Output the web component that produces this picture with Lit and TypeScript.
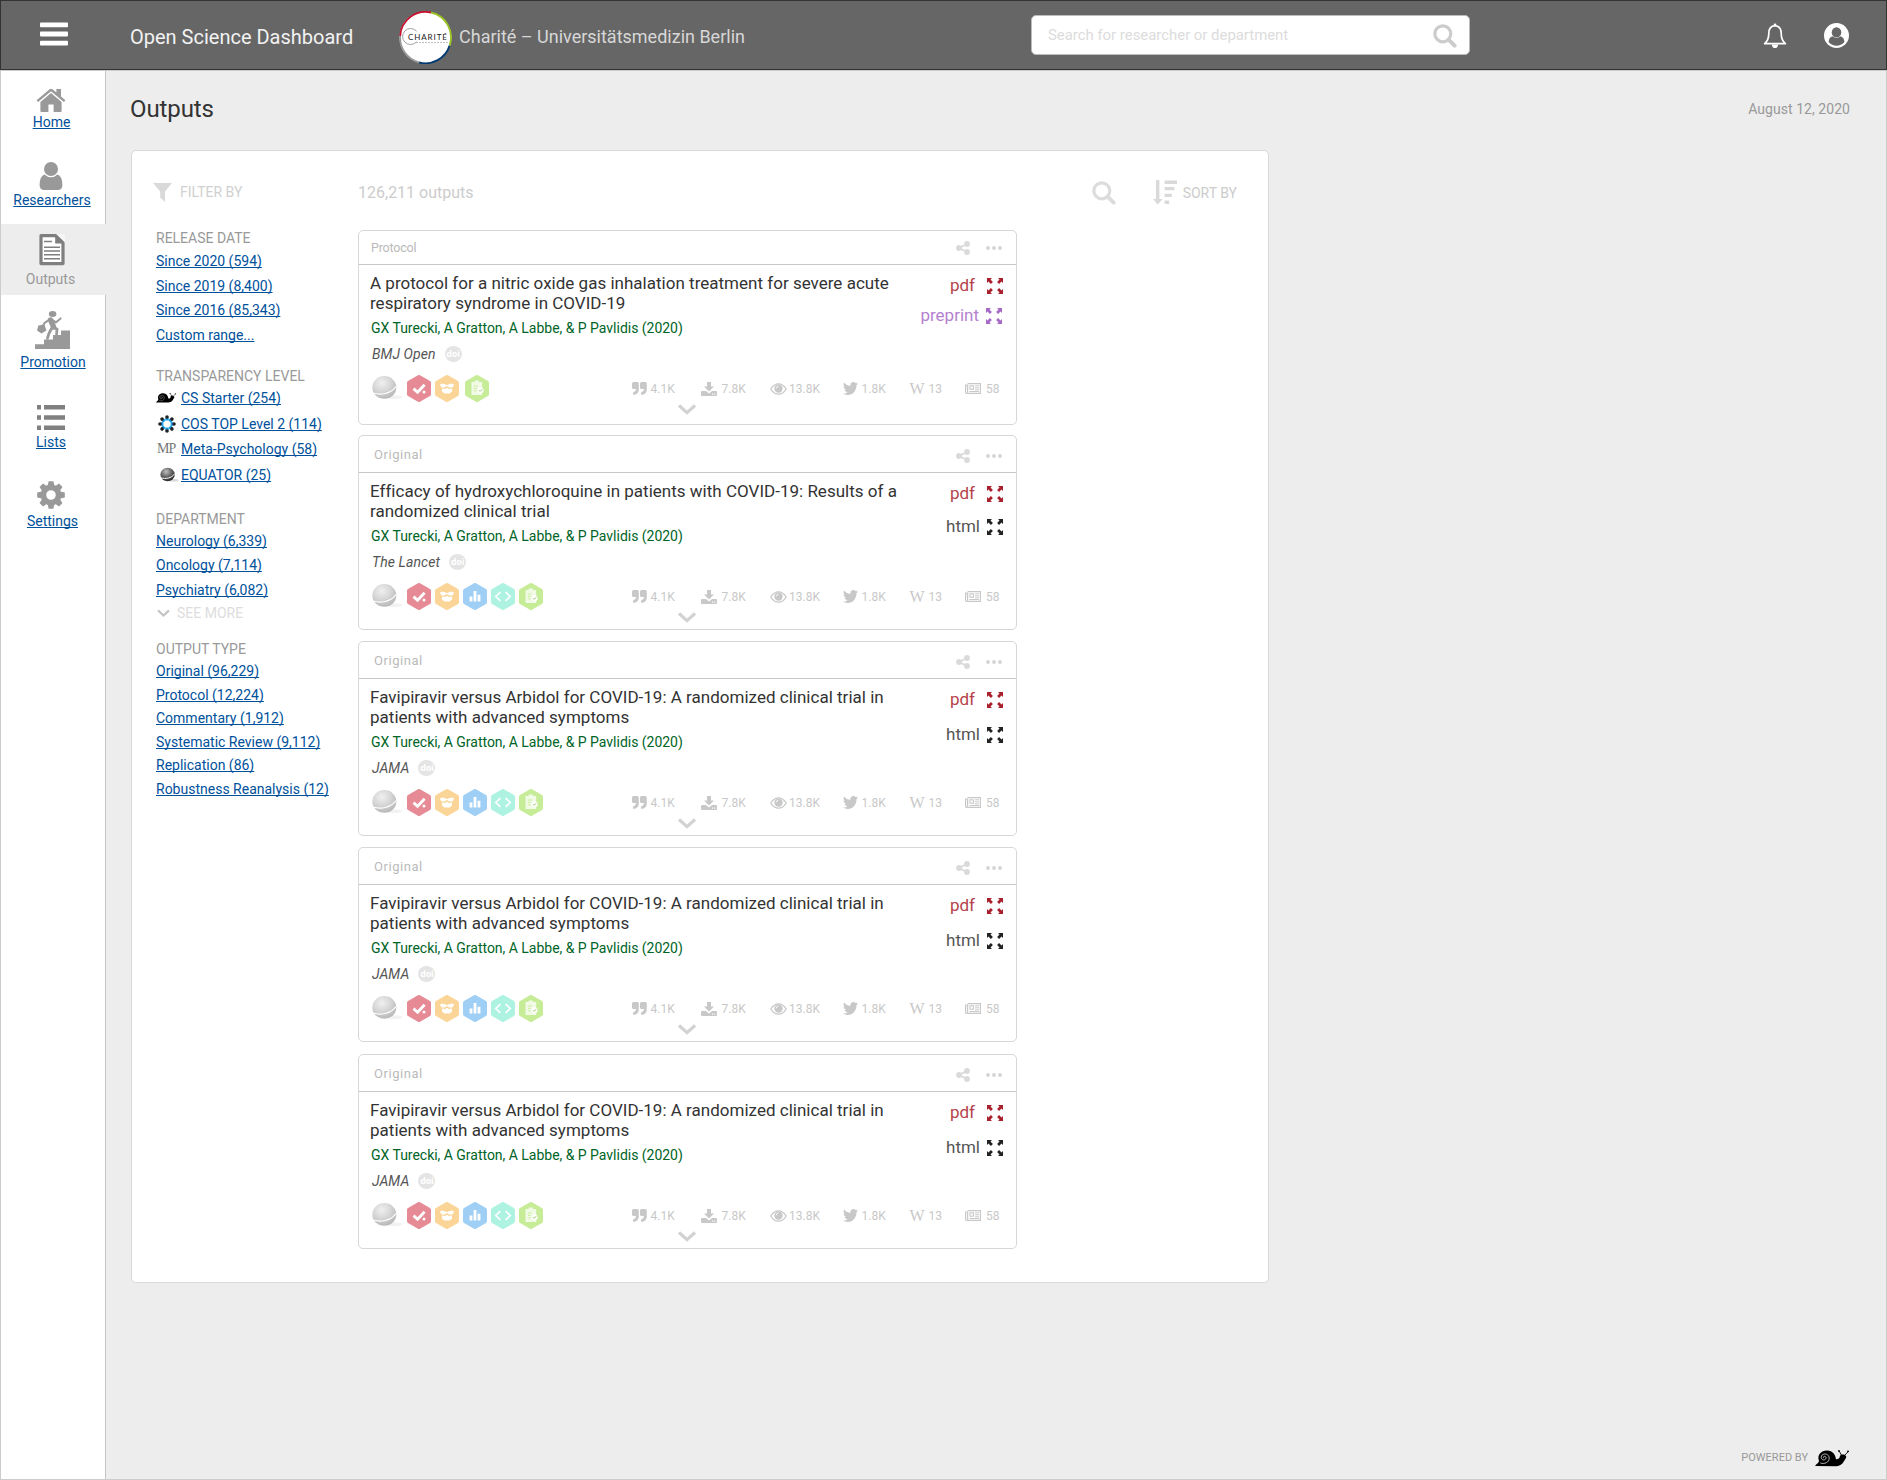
import { LitElement, html, css, svg, nothing } from "lit";
import { customElement, property } from "lit/decorators.js";
import { classMap } from "lit/directives/class-map.js";

type Badge = "check" | "box" | "bars" | "code" | "clip";

interface Output {
  kind: string;
  title: [string, string];
  journal: string;
  second: "preprint" | "html";
  badges: Badge[];
  compact?: boolean;
}

const ALL: Badge[] = ["check", "box", "bars", "code", "clip"];

const favipiravir: Output = {
  kind: "Original",
  title: ["Favipiravir versus Arbidol for COVID-19: A randomized clinical trial in", "patients with advanced symptoms"],
  journal: "JAMA",
  second: "html",
  badges: ALL,
};

const OUTPUTS: Output[] = [
  {
    kind: "Protocol",
    title: ["A protocol for a nitric oxide gas inhalation treatment for severe acute", "respiratory syndrome in COVID-19"],
    journal: "BMJ Open",
    second: "preprint",
    badges: ["check", "box", "clip"],
  },
  {
    kind: "Original",
    title: ["Efficacy of hydroxychloroquine in patients with COVID-19: Results of a", "randomized clinical trial"],
    journal: "The Lancet",
    second: "html",
    badges: ALL,
    compact: true,
  },
  favipiravir,
  favipiravir,
  favipiravir,
];

const searchIcon = (size: number, color: string) => html`
  <svg width=${size} height=${size} viewBox="0 0 24 24" fill="none" stroke=${color}>
    <circle cx="9.8" cy="9.8" r="8" stroke-width="3.2" />
    <path d="M15.6 15.6 L21.6 21.6" stroke-width="4" stroke-linecap="round" />
  </svg>`;

const chevron = (w: number, h: number, color: string, sw: number) => html`
  <svg width=${w} height=${h} viewBox="0 0 ${w} ${h}" fill="none">
    <path d="M1 1.4 L${w / 2} ${h - 2.4} L${w - 1} 1.4" stroke=${color} stroke-width=${sw} />
  </svg>`;

const snail = (w: number, h: number, eye: string) => html`
  <svg width=${w} height=${h} viewBox="0 0 34 17">
    <path fill="#000" d="M0 16 C1.5 13.5 3.5 13.5 4 11 C1.6 4.6 6.5 .4 12 .5 C18 .6 20.5 5 21 9.3 C23 9.6 24.6 8.6 24.8 6.6 C25 4.6 27 4.2 28.6 4.6 C31 5.2 32 7 30.6 8.6 C28.6 12 27.2 16 21 16.3 Z" />
    <path fill="none" stroke="#000" stroke-width=".9" d="M26.4 5 L24.2 1 M29.6 5.4 L33.4 1.4" />
    <circle cx="24" cy="1" r=".9" /><circle cx="33" cy="1.3" r=".9" />
    <path fill="none" stroke=${eye} stroke-width=".8" d="M8.6 8.2 C7.6 6.4 10.4 5.4 11 7.6 C11.4 10.4 6.4 11 6.2 7.4 C6.2 2.8 14 2.8 14.2 8 C14.4 12.6 9 14.4 5.4 13" />
  </svg>`;

const sphere = (w: number, h: number, dark: boolean) => html`
  <svg width=${w} height=${h} viewBox="0 0 31 25">
    <defs>
      <radialGradient id="ball" cx=".4" cy=".3" r=".75">
        <stop offset="0" stop-color=${dark ? "#c0c0c0" : "#f0f0f0"} />
        <stop offset=".5" stop-color=${dark ? "#666" : "#d6d6d6"} />
        <stop offset="1" stop-color=${dark ? "#222" : "#b4b4b4"} />
      </radialGradient>
    </defs>
    <ellipse cx="22" cy="22.2" rx="8.5" ry="2" fill=${dark ? "#d8d8d8" : "#f2f2f2"} />
    <ellipse cx="12.3" cy="12.4" rx="12" ry="11.3" fill="url(#ball)" />
    <path d="M1.4 18 C8 20.4 19 19 23.8 11.6" fill="none" stroke="#fff" stroke-width=${dark ? 1.6 : 1.1} />
  </svg>`;

const arrows = (color: string) => html`
  <svg width="16" height="16" viewBox="0 0 16 16" fill=${color}>
    ${[0, 90, 180, 270].map((a) => svg`<path transform="rotate(${a} 8 8)" d="M0 0 H5 L3.5 1.5 L5.9 3.9 L3.9 5.9 L1.5 3.5 L0 5 Z" />`)}
  </svg>`;

const BADGE_COLOR: Record<Badge, string> = {
  check: "#e68a95",
  box: "#fad597",
  bars: "#9fcff5",
  code: "#aef3e2",
  clip: "#c6ec97",
};

const BADGE_ART = {
  check: svg`<path d="M6.5 13.6 L10.6 17.2 L17.6 9.8" fill="none" stroke="#fff" stroke-width="2.8" /><circle cx="17" cy="17" r="1.5" fill="#fff" />`,
  box: svg`<path fill="#fff" d="M4.8 9.4 L7.4 8.4 L12 10 L16.6 8.4 L19.2 9.4 L17.4 12.4 L14.4 12.6 L12 11 L9.6 12.6 L6.6 12.4 Z M7 13.6 L10.2 14 L12 12.8 L13.8 14 L17 13.6 V16.6 L14.6 18.6 H9.4 L7 16.6 Z" />`,
  bars: svg`<path fill="#fff" d="M6.6 13.4 h2.8 v5.2 h-2.8 z M10.6 8 h2.8 v10.6 h-2.8 z M14.6 11.8 h2.8 v6.8 h-2.8 z" />`,
  code: svg`<path d="M9.4 9.2 L4.8 13.5 L9.4 17.8 M14.6 9.2 L19.2 13.5 L14.6 17.8" fill="none" stroke="#fff" stroke-width="1.7" />`,
  clip: svg`<path fill="#fff" fill-opacity=".75" d="M6.5 7 H9.6 V5.6 H14 V7 H17.2 V20 H6.5 Z" /><path d="M8.8 11 h4 M8.8 13.4 h3 M8.8 15.8 h3" stroke="#c6ec97" stroke-width=".9" /><circle cx="15.6" cy="15.2" r="3" fill="#fff" /><path d="M14 15.2 L15.3 16.4 L17.4 13.9" fill="none" stroke="#9fca6c" stroke-width=".9" />`,
};

const hexagon = (b: Badge) => html`
  <svg class=${classMap({ hex: true, clip: b === "clip" })} width="24" height="27" viewBox="0 0 24 27">
    <path d="M12 2 L22 7.7 V19.3 L12 25 L2 19.3 V7.7 Z" fill=${BADGE_COLOR[b]} stroke=${BADGE_COLOR[b]} stroke-width="4" stroke-linejoin="round" />
    ${BADGE_ART[b]}
  </svg>`;

const QUOTE = "M1.5 0 H5.3 Q6.8 0 6.8 1.6 V7.4 Q6.6 12.4 1.6 12.8 Q.9 12.8 .9 12 V11 Q.9 10.4 1.6 10.3 Q4 9.8 4 7 H1.6 Q0 7 0 5.4 V1.6 Q0 0 1.5 0 Z";

const STATS = [
  {
    cls: "quote",
    value: "4.1K",
    icon: html`<svg width="15" height="13" viewBox="0 0 15 13" fill="#c8c8c8"><path d=${QUOTE} /><path transform="translate(8 0)" d=${QUOTE} /></svg>`,
  },
  {
    cls: "download",
    value: "7.8K",
    icon: html`<svg width="16" height="14" viewBox="0 0 16 14" fill="#c8c8c8"><path d="M6 0 H10 V4.4 H13 L8 9.4 L3 4.4 H6 Z" /><path fill-rule="evenodd" d="M1 9 H5 L8 11.6 L11 9 H15 Q16 9 16 10 V13 Q16 14 15 14 H1 Q0 14 0 13 V10 Q0 9 1 9 Z M11 11.6 V12.7 H12.1 V11.6 Z M13.2 11.6 V12.7 H14.3 V11.6 Z" /></svg>`,
  },
  {
    cls: "views",
    value: "13.8K",
    icon: html`<svg width="17" height="12" viewBox="0 0 17 12"><path d="M.8 6 Q4 .8 8.5 .8 T16.2 6 Q13 11.2 8.5 11.2 T.8 6 Z" fill="#fff" stroke="#c8c8c8" stroke-width="1.3" /><circle cx="8.5" cy="5.6" r="4.2" fill="#c8c8c8" /><path d="M6.2 5.4 Q6.4 3.4 8.4 3.2" fill="none" stroke="#fff" stroke-width=".9" /></svg>`,
  },
  {
    cls: "tweets",
    value: "1.8K",
    icon: html`<svg width="15" height="13" viewBox="0 48 512 416" preserveAspectRatio="none" fill="#c8c8c8"><path d="M459.37 151.716c.325 4.548.325 9.097.325 13.645 0 138.72-105.583 298.558-298.558 298.558-59.452 0-114.68-17.219-161.137-47.106 8.447.974 16.568 1.299 25.34 1.299 49.055 0 94.213-16.568 130.274-44.832-46.132-.975-84.792-31.188-98.112-72.772 6.498.974 12.995 1.624 19.818 1.624 9.421 0 18.843-1.3 27.614-3.573-48.081-9.747-84.143-51.98-84.143-102.985v-1.299c13.969 7.797 30.214 12.67 47.431 13.319-28.264-18.843-46.781-51.005-46.781-87.391 0-19.492 5.197-37.36 14.294-52.954 51.655 63.675 129.3 105.258 216.365 109.807-1.624-7.797-2.599-15.918-2.599-24.04 0-57.828 46.782-104.934 104.934-104.934 30.213 0 57.502 12.67 76.67 33.137 23.715-4.548 46.456-13.32 66.599-25.34-7.798 24.366-24.366 44.833-46.132 57.827 21.117-2.273 41.584-8.122 60.426-16.243-14.292 20.791-32.161 39.308-52.628 54.253z" /></svg>`,
  },
  { cls: "wiki", value: "13", icon: html`<span class="w">W</span>` },
  {
    cls: "news",
    value: "58",
    icon: html`<svg width="16" height="11" viewBox="0 0 16 11" fill="none" stroke="#c8c8c8"><path d="M2.6 .6 H15.4 V10.4 H1.6 Q.6 10.4 .6 9.4 V2 H2.6 V9.6" stroke-width="1.2" /><rect x="5" y="2.8" width="3.4" height="3.4" stroke-width="1.1" /><path d="M10 2.8 H14 M10 4.8 H14 M10 6.8 H14 M4.5 8.5 H14" stroke-width="1" /></svg>`,
  },
];

@customElement("output-card")
class OutputCard extends LitElement {
  @property({ attribute: false }) item!: Output;

  static styles = css`
    :host {
      display: block;
      box-sizing: border-box;
      width: 659px;
      height: 195px;
      border: 1px solid #d7d7d7;
      border-radius: 5px;
      background: #fff;
    }
    svg { display: block; flex: none; }
    .head {
      display: flex;
      box-sizing: border-box;
      height: 37px;
      border-bottom: 1px solid #c8c8c8;
      padding: 0 14px 0 15px;
      align-items: flex-start;
      justify-content: space-between;
    }
    .kind { font-size: 13px; line-height: 15px; letter-spacing: 0.55px; color: #bababa; margin-top: 11px; }
    .tools { display: flex; gap: 16px; align-items: center; margin-top: 13px; }
    .protocol .head { height: 34px; padding-left: 12px; }
    .protocol .kind { font-size: 12.5px; letter-spacing: -0.2px; margin-top: 9px; }
    .protocol .tools { margin-top: 10px; }
    .body { display: flex; justify-content: space-between; padding: 8px 13px 0 11px; height: 90px; }
    .title { font-size: 17px; line-height: 20px; letter-spacing: 0.012px; color: #333; white-space: nowrap; }
    .authors { font-size: 14px; line-height: 16px; letter-spacing: -0.02px; color: #006426; margin: 7px 0 0 1px; white-space: nowrap; }
    .journal { display: flex; align-items: center; height: 17px; margin: 9px 0 0 2px; font-size: 14px; line-height: 16px; letter-spacing: 0.08px; font-style: italic; color: #555; }
    .doi {
      width: 17px; height: 16px; border-radius: 50%; background: #e4e4e4; color: #fff;
      font: bold 9px/15px "Open Sans", sans-serif; letter-spacing: -0.2px; text-align: center; margin-left: 9px;
    }
    .links { display: flex; flex-direction: column; align-items: flex-end; padding-top: 3px; font-size: 17px; line-height: 19px; }
    .link { display: flex; align-items: center; height: 19px; gap: 7px; }
    .pdf { color: #b5424b; gap: 12px; }
    .html { color: #555; margin-top: 16px; }
    .compact .html { margin-top: 14px; }
    .preprint { color: #b57fd0; margin: 11px 1px 0 0; }
    .meta { display: flex; justify-content: space-between; padding: 12px 0 0 13px; height: 27px; align-items: center; }
    .badges { display: flex; gap: 4px; }
    .ball { width: 31px; }
    .protocol .clip { margin-left: 2px; }
    .stats { display: grid; grid-template-columns: 69px 69.5px 72.5px 67px 55.5px 51px; color: #c8c8c8; font-size: 12px; line-height: 14px; }
    .stat { display: flex; align-items: center; gap: 4px; }
    .stat.download, .stat.news { gap: 5px; }
    .stat.views { gap: 2px; }
    .w { font: 16px/14px "Liberation Serif", serif; }
    .more { display: flex; justify-content: center; margin-top: 2px; }
    .more svg { margin-right: 2px; }
  `;

  render() {
    const o = this.item;
    return html`<div class=${classMap({ [o.kind.toLowerCase()]: true, compact: !!o.compact })}>
      <div class="head">
        <span class="kind">${o.kind}</span>
        <div class="tools">
          <svg width="14" height="14" viewBox="0 0 14 14" fill="#dadada" stroke="#dadada">
            <path d="M11 3 L3 7 L11 11" fill="none" stroke-width="1.9" /><circle cx="11" cy="3" r="2.9" stroke="none" /><circle cx="3" cy="7" r="2.9" stroke="none" /><circle cx="11" cy="11" r="2.9" stroke="none" />
          </svg>
          <svg width="16" height="4" viewBox="0 0 16 4" fill="#d4d4d4"><circle cx="2" cy="2" r="1.9" /><circle cx="8" cy="2" r="1.9" /><circle cx="14" cy="2" r="1.9" /></svg>
        </div>
      </div>
      <div class="body">
        <div>
          <div class="title">${o.title[0]}<br />${o.title[1]}</div>
          <div class="authors">GX Turecki, A Gratton, A Labbe, &amp; P Pavlidis (2020)</div>
          <div class="journal"><span>${o.journal}</span><span class="doi">doi</span></div>
        </div>
        <div class="links">
          <div class="link pdf"><span>pdf</span>${arrows("#a8202b")}</div>
          <div class="link ${o.second}"><span>${o.second}</span>${arrows(o.second === "html" ? "#222" : "#a66ac6")}</div>
        </div>
      </div>
      <div class="meta">
        <div class="badges"><span class="ball">${sphere(31, 25, false)}</span>${o.badges.map(hexagon)}</div>
        <div class="stats">
          ${STATS.map((s) => html`<div class="stat ${s.cls}">${s.icon}<span>${s.value}</span></div>`)}
        </div>
      </div>
      <div class="more">${chevron(18, 11, "#d2d2d2", 3.2)}</div>
    </div>`;
  }
}

const EIGHTHS = [0, 45, 90, 135, 180, 225, 270, 315];

const NAV = [
  {
    id: "home",
    label: "Home",
    icon: html`<svg width="30" height="24" viewBox="0 0 30 24" fill="#999"><path d="M15 5 L25.6 14 V23 Q25.6 24 24.6 24 H17.6 V16.6 H12.4 V24 H5.4 Q4.4 24 4.4 23 V14 Z" /><path d="M.6 12.2 L13.6 1.2 Q15 .2 16.4 1.2 L20.4 4.6 V1 H25 V8.4 L29.4 12.2 L27.9 14 L15 3.2 L2.1 14 Z" /></svg>`,
  },
  {
    id: "people",
    label: "Researchers",
    icon: html`<svg width="24" height="28" viewBox="0 0 24 28" fill="#999"><circle cx="12" cy="7" r="7" /><path d="M5.6 12.4 Q8.4 15.2 12 15.2 T18.4 12.4 Q23.4 14 23.4 23 Q23.4 28 18.6 28 H5.4 Q.6 28 .6 23 Q.6 14 5.6 12.4 Z" /></svg>`,
  },
  {
    id: "outputs",
    label: "Outputs",
    icon: html`<svg width="26" height="32" viewBox="0 0 26 32"><path d="M2 1.7 H16.6 L24 9 V29.6 H2 Z" fill="#fff" stroke="#7f7f7f" stroke-width="3.2" stroke-linejoin="round" /><path d="M16.2 1 V9.4 H25 Z" fill="#7f7f7f" /><path d="M17.6 .2 H26 V8 Z" fill="#f6f6f6" /><path d="M5 7.6 H13 M5 13.2 H21 M5 17 H21 M5 20.8 H21 M5 24.8 H21" stroke="#7f7f7f" stroke-width="1.5" /></svg>`,
  },
  {
    id: "promotion",
    label: "Promotion",
    icon: html`<svg width="35" height="38" viewBox="0 0 35 38" fill="#999"><path d="M0 38 V33.2 H9 V28.6 H18 V24 H26 V19.4 H35 V38 Z" /><ellipse cx="17.6" cy="3" rx="3.8" ry="3" /><path d="M3.4 14.6 L9.4 13.4 L11.4 19.4 L6.4 22.4 L2 19.6 Z" /><g fill="none" stroke="#999" stroke-linecap="round"><path d="M15.6 9 L18.6 16" stroke-width="5.4" /><path d="M14.4 8.6 L9.6 12 L7.6 15.6 M17.6 9 L20.8 11.4 L25.6 7.4" stroke-width="2" /><path d="M17 16.6 L14 22.4 L12.4 27.4 M18.4 16 L22 18.2 L21.6 23" stroke-width="2.8" /></g></svg>`,
  },
  {
    id: "lists",
    label: "Lists",
    icon: html`<svg width="28" height="25" viewBox="0 0 28 25" fill="#808080"><path d="M0 0 h4 v4.6 h-4z M7 0 h21 v4.6 h-21z M0 10.2 h4 v4.6 h-4z M7 10.2 h21 v4.6 h-21z M0 20.4 h4 v4.6 h-4z M7 20.4 h21 v4.6 h-21z" /></svg>`,
  },
  {
    id: "settings",
    label: "Settings",
    icon: html`<svg width="28" height="28" viewBox="-14 -14 28 28" fill="#999"><circle r="7.6" fill="none" stroke="#999" stroke-width="5.6" />${EIGHTHS.map((a) => svg`<path transform="rotate(${a})" d="M-3.4 -9 L-2.4 -13.8 H2.4 L3.4 -9 Z" />`)}</svg>`,
  },
];

const FILTERS = [
  { id: "release", title: "RELEASE DATE", rows: [{ t: "Since 2020 (594)" }, { t: "Since 2019 (8,400)" }, { t: "Since 2016 (85,343)" }, { t: "Custom range..." }] },
  {
    id: "level",
    title: "TRANSPARENCY LEVEL",
    rows: [
      { t: "CS Starter (254)", icon: snail(20, 12, "#999") },
      {
        t: "COS TOP Level 2 (114)",
        icon: html`<svg width="18" height="18" viewBox="-9 -9 18 18">${EIGHTHS.map((a) => svg`<g transform="rotate(${a})"><circle cy="-4.9" r="1.9" fill="#1ba0e6" /><circle cy="-7" r="1.8" fill="#222" /></g>`)}<circle r="3.6" fill="#fff" /></svg>`,
      },
      { t: "Meta-Psychology (58)", icon: html`<span class="mp">MP</span>` },
      { t: "EQUATOR (25)", icon: html`<span class="eq">${sphere(19, 15, true)}</span>` },
    ],
  },
  { id: "dept", title: "DEPARTMENT", rows: [{ t: "Neurology (6,339)" }, { t: "Oncology (7,114)" }, { t: "Psychiatry (6,082)" }] },
  {
    id: "type",
    title: "OUTPUT TYPE",
    rows: [{ t: "Original (96,229)" }, { t: "Protocol (12,224)" }, { t: "Commentary (1,912)" }, { t: "Systematic Review (9,112)" }, { t: "Replication (86)" }, { t: "Robustness Reanalysis (12)" }],
  },
] as { id: string; title: string; rows: { t: string; icon?: unknown }[] }[];

@customElement("app-root")
class AppRoot extends LitElement {
  static styles = css`
    :host {
      display: flex;
      flex-direction: column;
      width: 1887px;
      height: 1480px;
      overflow: hidden;
      background: #ededed;
      font-family: Roboto, "Liberation Sans", sans-serif;
      color: #333;
    }
    svg { display: block; flex: none; }
    a { color: #00519c; text-decoration: underline; text-decoration-skip-ink: none; }
    .top {
      display: flex;
      box-sizing: border-box;
      height: 70px;
      flex: none;
      border: 1px solid #333;
      background: #666;
      align-items: center;
      padding: 0 37px 0 39px;
    }
    .menu { margin: -2px 62px 0 0; }
    .brand { font-size: 20px; line-height: 24px; color: #f2f2f2; width: 269px; margin-top: 4px; }
    .logo { margin-top: 4px; }
    .org { font-size: 18px; line-height: 21px; color: #d7d7d7; margin: 2px 0 0 7px; width: 572px; }
    .search {
      display: flex; align-items: center; justify-content: space-between; box-sizing: border-box;
      width: 439px; height: 40px; border: 1px solid #bbb; border-radius: 5px; background: #fff;
      padding: 0 12px 0 16px; font-size: 14.9px; color: #dcdcdc;
    }
    .search svg { margin-top: 2px; }
    .icons { display: flex; align-items: center; gap: 37px; margin-left: auto; margin-top: 1px; }
    .main { display: flex; flex: 1; box-sizing: border-box; border: 1px solid #ccc; }
    .side { width: 104px; background: #fff; border-right: 1px solid #c4c4c4; flex: none; }
    .item { display: flex; flex-direction: column; align-items: center; font-size: 14px; line-height: 16px; box-sizing: border-box; width: 104px; padding-right: 4px; }
    .home { height: 76px; padding-top: 17px; }
    .home svg { margin-bottom: 2px; }
    .home a { margin-left: 1px; }
    .people { height: 77px; padding-top: 15px; }
    .people svg { margin-bottom: 2px; }
    .people a { margin-left: 2px; }
    .outputs { height: 71px; width: 106px; padding: 10px 7px 0 0; background: #ededed; color: #999; }
    .outputs svg { margin: 0 0 5px 2px; }
    .promotion { height: 96px; padding-top: 16px; padding-right: 1px; }
    .promotion svg { margin-bottom: 5px; }
    .promotion a { margin-left: 1px; }
    .lists { height: 77px; padding-top: 14px; }
    .lists svg { margin-bottom: 4px; }
    .settings { height: 77px; padding-top: 13px; }
    .settings svg { margin-bottom: 4px; }
    .settings a { margin-left: 3px; }
    .content { display: flex; flex-direction: column; flex: 1; padding: 0 36px 12px 25px; }
    .headline { display: flex; justify-content: space-between; height: 79px; align-items: flex-start; }
    h1 { font-size: 24px; line-height: 28px; font-weight: 400; margin: 24px 0 0 -1px; letter-spacing: -0.1px; }
    .date { font-size: 14px; line-height: 16px; letter-spacing: 0.05px; color: #999; margin-top: 30px; }
    .panel { box-sizing: border-box; width: 1138px; height: 1133px; background: #fff; border: 1px solid #d9d9d9; border-radius: 5px; display: grid; grid-template-columns: 202px 1fr; padding-left: 24px; }
    .filterby { display: flex; align-items: center; font-size: 14px; line-height: 16px; color: #d0d0d0; height: 20px; margin: 31px 0 0 -3px; gap: 8px; }
    .group h2 { font-size: 14px; line-height: 16px; font-weight: 400; color: #999; margin: 0; }
    .row { display: flex; align-items: center; font-size: 14px; white-space: nowrap; }
    .release { margin-top: 28px; }
    .release .row { height: 24.6px; }
    .release .rows { margin-top: 3px; }
    .level { margin-top: 20.6px; }
    .level .row { height: 25.6px; }
    .level .rows { margin-top: 1.4px; }
    .slot { width: 25px; display: flex; }
    .level .row:nth-child(2) .slot { padding-left: 2px; box-sizing: border-box; }
    .mp { font: 14px/16px "Liberation Serif", serif; letter-spacing: -1px; color: #777; padding-left: 1px; }
    .eq { padding-left: 4px; }
    .dept { margin-top: 23px; }
    .dept .row { height: 24.5px; }
    .dept .rows { margin-top: 2px; }
    .seemore { display: flex; align-items: center; gap: 7px; font-size: 14px; line-height: 16px; color: #ddd; margin: 3px 0 0 1px; }
    .type { margin-top: 20px; }
    .type .row { height: 23.6px; }
    .type .rows { margin-top: 2px; }
    .bar { display: flex; align-items: center; height: 25px; margin: 29px 0 0; color: #ccc; padding-right: 31px; font-size: 14px; }
    .count { font-size: 16px; line-height: 19px; flex: 1; margin-bottom: 1px; }
    .bar .sort { display: flex; align-items: center; gap: 6px; margin-left: 37px; }
    .cards { display: flex; flex-direction: column; gap: 11px; padding-top: 25px; }
    .cards output-card:first-child { margin-bottom: -1px; }
    .cards output-card:last-child { margin-top: 1px; }
    .foot { display: flex; align-items: center; justify-content: flex-end; gap: 7px; margin: auto 1px 0 0; font-size: 11px; line-height: 14px; color: #999; height: 18px; }
  `;

  render() {
    return html`
      <header class="top">
        <svg class="menu" width="28" height="24" viewBox="0 0 28 24" fill="#fff"><rect y=".4" width="28" height="4.8" rx=".8" /><rect y="9.6" width="28" height="4.8" rx=".8" /><rect y="18.8" width="28" height="4.8" rx=".8" /></svg>
        <span class="brand">Open Science Dashboard</span>
        <svg class="logo" width="53" height="53" viewBox="0 0 53 53">
          <circle cx="26.5" cy="26.5" r="26" fill="#fff" />
          <g fill="none" stroke-width="1.8">
            <path d="M1.2 25 A25.4 25.4 0 0 1 32 1.5" stroke="#c8102e" />
            <path d="M32 1.5 A25.4 25.4 0 0 1 50.6 34.6" stroke="#96c11f" />
            <path d="M50.6 34.6 A25.4 25.4 0 0 1 20 51.4" stroke="#003a70" />
            <path d="M20 51.4 A25.4 25.4 0 0 1 1.2 25" stroke="#999" />
          </g>
          <circle cx="11.6" cy="25.5" r="8" fill="none" stroke="#888" stroke-width=".8" />
          <path d="M14 20.4 H22 V30.6 H14 Z" fill="#fff" />
          <text x="9" y="28.8" font-family="Lato, sans-serif" font-size="8" letter-spacing="1.1" textLength="40" fill="#222">CHARITÉ</text>
          <path d="M17 31.6 H49" stroke="#aaa" stroke-width=".8" stroke-dasharray="2 1" />
        </svg>
        <span class="org">Charité – Universitätsmedizin Berlin</span>
        <div class="search"><span>Search for researcher or department</span>${searchIcon(24, "#ccc")}</div>
        <div class="icons">
          <svg width="24" height="26" viewBox="0 0 24 26" fill="none" stroke="#fff" stroke-width="1.7"><path d="M12 2.6 C7.4 3 5.8 6.4 5.8 10.4 C5.8 15.6 4.4 18.2 1.6 20.6 H22.4 C19.6 18.2 18.2 15.6 18.2 10.4 C18.2 6.4 16.6 3 12 2.6 Z" stroke-linejoin="round" /><path d="M12 .6 V2.6" stroke-width="2.4" /><path d="M8.8 21.4 H15.2 Q14.8 25 12 25 T8.8 21.4 Z" fill="#fff" stroke="none" /></svg>
          <svg width="25" height="25" viewBox="0 0 25 25"><circle cx="12.5" cy="12.5" r="12.5" fill="#fff" /><path d="M4.6 19 Q5 14 8.6 13.2 Q12.5 16.8 16.4 13.2 Q20 14 20.4 19 Q17 22.8 12.5 22.8 T4.6 19 Z" fill="#666" /><ellipse cx="12.5" cy="9.4" rx="4.8" ry="5.2" fill="#666" /></svg>
        </div>
      </header>
      <div class="main">
        <nav class="side">
          ${NAV.map((n) => html`<div class="item ${n.id}">${n.icon}${n.id === "outputs" ? html`<span>${n.label}</span>` : html`<a>${n.label}</a>`}</div>`)}
        </nav>
        <div class="content">
          <div class="headline"><h1>Outputs</h1><span class="date">August 12, 2020</span></div>
          <section class="panel">
            <aside>
              <div class="filterby"><svg width="19" height="19" viewBox="0 0 19 19" fill="#d9d9d9"><path d="M0 0 H19 L12 8.4 V19 L7.2 14.6 V8.4 Z" /></svg><span>FILTER BY</span></div>
              ${FILTERS.map((g) => html`
                <div class="group ${g.id}">
                  <h2>${g.title}</h2>
                  <div class="rows">${g.rows.map((r) => html`<div class="row">${r.icon ? html`<span class="slot">${r.icon}</span>` : nothing}<a>${r.t}</a></div>`)}</div>
                  ${g.id === "dept" ? html`<div class="seemore">${chevron(13, 9, "#c4c4c4", 2.2)}<span>SEE MORE</span></div>` : nothing}
                </div>`)}
            </aside>
            <div>
              <div class="bar">
                <span class="count">126,211 outputs</span>
                ${searchIcon(24, "#dcdcdc")}
                <span class="sort"><svg width="24" height="25" viewBox="0 0 24 25" fill="#d9d9d9"><path d="M3 0 H6.4 V19 H9.6 L4.7 24.6 L0 19 H3 Z M11.6 .4 H24 V4 H11.6 Z M11.6 7 H21.4 V10.2 H11.6 Z M11.6 13.8 H18.8 V17 H11.6 Z M11.6 20.6 H16.2 V24 H11.6 Z" /></svg><span>SORT BY</span></span>
              </div>
              <div class="cards">${OUTPUTS.map((o) => html`<output-card .item=${o}></output-card>`)}</div>
            </div>
          </section>
          <footer class="foot"><span>POWERED BY</span>${snail(34, 17, "#ddd")}</footer>
        </div>
      </div>`;
  }
}
